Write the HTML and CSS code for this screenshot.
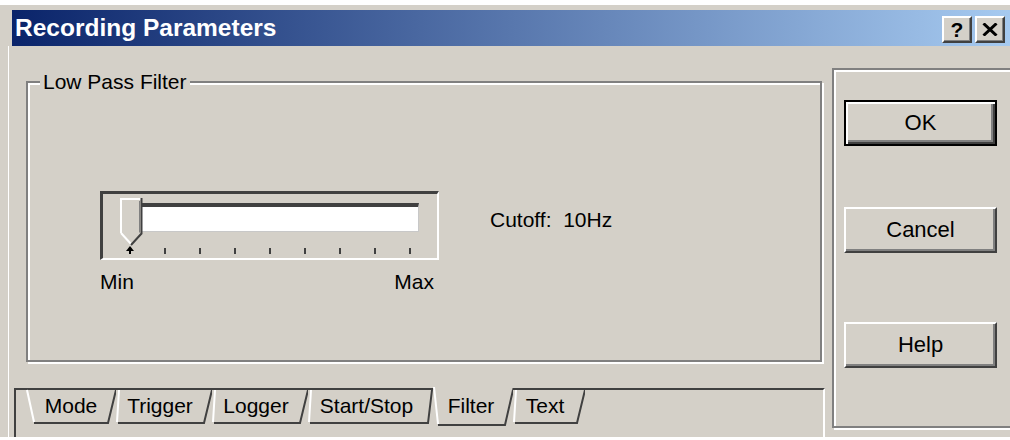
FILE: index.html
```html
<!DOCTYPE html>
<html lang="en">
<head>
<meta charset="utf-8">
<title>Recording Parameters</title>
<link rel="stylesheet" href="styles.css">
</head>
<body>
<div class="window">
  <div class="titlebar">
    <span class="title">Recording Parameters</span>
    <div class="caption-buttons">
      <div class="cap-btn cap-help">?</div>
      <div class="cap-btn">
        <svg width="16" height="13" viewBox="0 0 16 13"><path d="M1.5 0.5 L14.5 12.5 M14.5 0.5 L1.5 12.5" stroke="#000" stroke-width="3" fill="none"/></svg>
      </div>
    </div>
  </div>

  <div class="client">
    <div class="tabctl">
      <div class="page">
        <fieldset class="group">
          <legend class="group-title">Low Pass Filter</legend>
          <div class="group-body">
            <div class="slider-col">
              <div class="slider">
                <div class="channel"></div>
                <div class="ticks">
                  <div class="tick tick-first">
                    <svg width="8" height="8" viewBox="0 0 8 8"><path d="M4 0 L8 5 H0 Z" fill="#000"/><rect x="3" y="5" width="2" height="3" fill="#000"/></svg>
                  </div>
                  <div class="tick"><i></i></div>
                  <div class="tick"><i></i></div>
                  <div class="tick"><i></i></div>
                  <div class="tick"><i></i></div>
                  <div class="tick"><i></i></div>
                  <div class="tick"><i></i></div>
                  <div class="tick"><i></i></div>
                  <div class="tick"><i></i></div>
                </div>
                <svg class="thumb" width="23" height="48" viewBox="0 0 23 48">
                  <path d="M0 0 H22 V35 L11 47 L0 35 Z" fill="#d4d0c8"/>
                  <path d="M1 35 V1 H21 M1 35 L11 46" stroke="#fff" stroke-width="2" fill="none"/>
                  <path d="M21.5 0 V35.5 L11 47" stroke="#404040" stroke-width="2" fill="none"/>
                  <path d="M19.5 3 V34.5" stroke="#808080" stroke-width="1" fill="none"/>
                </svg>
              </div>
              <div class="scale">
                <span>Min</span>
                <span>Max</span>
              </div>
            </div>
            <div class="cutoff">Cutoff:&nbsp; 10Hz</div>
          </div>
        </fieldset>
      </div>

      <div class="strip">
        <div class="tabrow">
          <div class="tab tab-first w90">
            <svg width="90" height="40"><path class="hl" d="M1 4 L8 36"/><path class="sh" d="M8 37 H82 L90 4"/></svg>
            <span>Mode</span>
          </div>
          <div class="tab w96">
            <svg width="96" height="40"><path class="hl" d="M1 36 L3 4"/><path class="sh" d="M2 37 H88 L96 4"/></svg>
            <span>Trigger</span>
          </div>
          <div class="tab w96">
            <svg width="96" height="40"><path class="hl" d="M1 36 L3 4"/><path class="sh" d="M2 37 H88 L96 4"/></svg>
            <span>Logger</span>
          </div>
          <div class="tab w125">
            <svg width="125" height="40"><path class="hl" d="M1 36 L3 4"/><path class="sh" d="M2 37 H120 L124 4"/></svg>
            <span>Start/Stop</span>
          </div>
          <div class="tab tab-active w80">
            <svg width="80" height="40"><path class="face" d="M0 0 H80 L72 39 H5 Z"/><path class="hl" d="M1 1 L5 38"/><path class="sh" d="M5 39 H72 L80 4"/></svg>
            <span>Filter</span>
          </div>
          <div class="tab w72">
            <svg width="72" height="40"><path class="hl" d="M1 36 L3 4"/><path class="sh" d="M2 37 H64 L72 4"/></svg>
            <span>Text</span>
          </div>
        </div>
      </div>
    </div>

    <div class="side">
      <div class="btn btn-default">OK</div>
      <div class="btn btn-cancel">Cancel</div>
      <div class="btn btn-help">Help</div>
    </div>
  </div>
</div>
</body>
</html>
```

FILE: styles.css
```css
body {
  margin: 0;
  background: #fff;
  font-family: "Liberation Sans", Arial, sans-serif;
  font-size: 21px;
  color: #000;
}

.window {
  width: 1010px;
  height: 432px;
  margin-top: 5px;
  padding-top: 5px;
  box-sizing: border-box;
  background: #d4d0c8;
  overflow: hidden;
}

/* caption */
.titlebar {
  height: 36px;
  margin-left: 12px;
  padding: 0 5px 0 3px;
  display: flex;
  align-items: center;
  justify-content: space-between;
  background: linear-gradient(to right, #0a246a, #a6caf0);
}

.title {
  color: #fff;
  font-weight: bold;
  font-size: 24.5px;
  line-height: 30px;
}

.caption-buttons {
  display: flex;
  gap: 3px;
  margin-top: 2px;
}

.cap-btn {
  width: 30px;
  height: 27px;
  box-sizing: border-box;
  display: flex;
  align-items: center;
  justify-content: center;
  background: #d4d0c8;
  border: 2px solid;
  border-color: #fff #404040 #404040 #fff;
  box-shadow: inset -1px -1px 0 #808080;
}

.cap-help {
  font-weight: bold;
  font-size: 21px;
  line-height: 1;
}

/* client area */
.client {
  display: flex;
  align-items: flex-start;
  height: 391px;
}

.tabctl {
  width: 817px;
  height: 391px;
  margin-left: 8px;
  box-sizing: border-box;
  border-left: 1px solid #fff;
  display: flex;
  flex-direction: column;
}

.page {
  height: 342px;
  box-sizing: border-box;
  padding: 24px 0 0 17px;
}

.group {
  width: 796px;
  height: 292px;
  margin: 0;
  padding: 0;
  min-width: 0;
  box-sizing: border-box;
  border: 2px solid #808080;
  box-shadow: 2px 2px 0 #fff, inset 2px 2px 0 #fff;
}

.group-title {
  margin-left: 12px;
  padding: 0 3px;
  line-height: 24px;
  background: #d4d0c8;
}

.group-body {
  display: flex;
  align-items: flex-start;
  padding: 97px 0 0 72px;
}

/* slider */
.slider-col {
  display: flex;
  flex-direction: column;
}

.slider {
  position: relative;
  width: 339px;
  height: 69px;
  box-sizing: border-box;
  border-style: solid;
  border-width: 3px 2px 2px 3px;
  border-color: #404040 #fff #fff #404040;
}

.channel {
  width: 299px;
  height: 29px;
  margin: 9px 0 0 17px;
  box-sizing: border-box;
  background: #fff;
  border-top: 4px solid #404040;
  border-bottom: 1px solid #c8c8c8;
  border-right: 1px solid #c8c8c8;
}

.ticks {
  width: 288px;
  height: 8px;
  margin: 14px 0 0 23px;
  display: flex;
  justify-content: space-between;
  align-items: flex-end;
}

.tick {
  width: 8px;
  height: 8px;
  display: flex;
  justify-content: center;
  align-items: flex-end;
}

.tick i {
  display: block;
  width: 2px;
  height: 6px;
  background: #404040;
}

.thumb {
  position: absolute;
  left: 17px;
  top: 4px;
}

.scale {
  width: 334px;
  margin-top: 10px;
  display: flex;
  justify-content: space-between;
  line-height: 24px;
}

.cutoff {
  margin: 17px 0 0 51px;
  line-height: 24px;
}

/* tab strip along the bottom */
.strip {
  width: 811px;
  height: 49px;
  margin-left: 5px;
  box-sizing: border-box;
  border-top: 2px solid #404040;
  border-left: 2px solid #404040;
  border-right: 2px solid #fff;
}

.tabrow {
  display: flex;
  margin: -4px 0 0 10px;
}

.tab {
  position: relative;
  height: 40px;
  box-sizing: border-box;
  display: flex;
  align-items: center;
  justify-content: center;
  padding-right: 8px;
  line-height: 24px;
}

.tab-first { padding-right: 0; }
.tab-active { padding-right: 4px; }

.w90 { width: 90px; }
.w96 { width: 96px; }
.w125 { width: 125px; }
.w80 { width: 80px; }
.w72 { width: 72px; }

.tab svg {
  position: absolute;
  left: 0;
  top: 0;
}

.tab span { position: relative; }

.tab .hl { stroke: #fff; stroke-width: 2; fill: none; }
.tab .sh { stroke: #404040; stroke-width: 2; fill: none; }
.tab .face { fill: #d4d0c8; }

/* command buttons */
.side {
  width: 200px;
  height: 360px;
  margin: 22px 0 0 7px;
  padding: 30px 0 0 10px;
  box-sizing: border-box;
  border: 2px solid #808080;
  box-shadow: 2px 2px 0 #fff, inset 2px 2px 0 #fff;
  display: flex;
  flex-direction: column;
  align-items: flex-start;
  flex-shrink: 0;
}

.btn {
  width: 153px;
  height: 46px;
  box-sizing: border-box;
  display: flex;
  align-items: center;
  justify-content: center;
  font-size: 22px;
  background: #d4d0c8;
  border: 2px solid;
  border-color: #fff #404040 #404040 #fff;
  box-shadow: inset -2px -2px 0 #808080;
}

.btn-default {
  border-color: #000;
  box-shadow: inset 2px 2px 0 #fff, inset -2px -2px 0 #404040, inset -4px -4px 0 #808080;
}

.btn-cancel { margin-top: 61px; }
.btn-help { margin-top: 69px; }
```
